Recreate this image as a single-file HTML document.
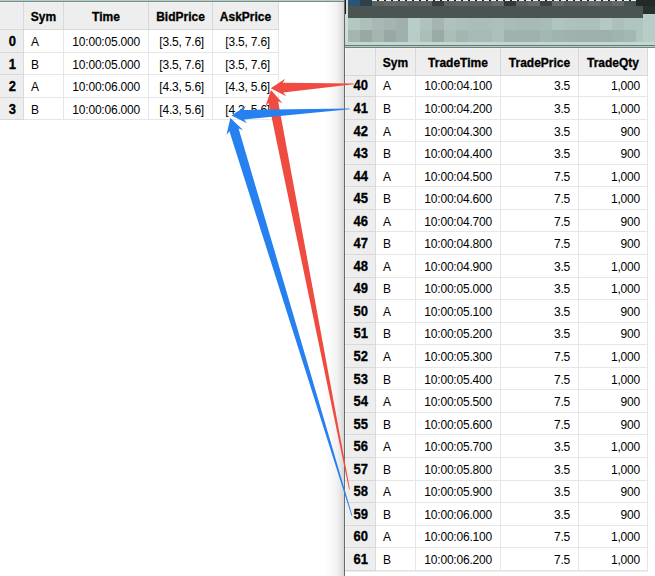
<!DOCTYPE html>
<html><head><meta charset="utf-8"><style>
html,body{margin:0;padding:0;}
body{width:655px;height:576px;position:relative;overflow:hidden;background:#fff;font-family:"Liberation Sans",sans-serif;}
body>div{position:absolute;}
.t{white-space:nowrap;overflow:visible;}
</style></head><body>
<div style="left:0px;top:0px;width:345px;height:1px;background:#b8ccc6;"></div><div style="left:0px;top:1px;width:345px;height:1px;background:#748e88;"></div><div style="left:0px;top:2px;width:278px;height:27px;background:#eeeeee;"></div><div style="left:0px;top:2px;width:278px;height:1px;background:#f1f1f1;"></div><div style="left:0px;top:29px;width:23px;height:91px;background:#eeeeee;"></div><div style="left:23px;top:2px;width:1px;height:27px;background:#d9d9d9;"></div><div style="left:23px;top:29px;width:1px;height:91px;background:#dadada;"></div><div style="left:63px;top:2px;width:1px;height:27px;background:#d9d9d9;"></div><div style="left:63px;top:29px;width:1px;height:91px;background:#e6e6e6;"></div><div style="left:148px;top:2px;width:1px;height:27px;background:#d9d9d9;"></div><div style="left:148px;top:29px;width:1px;height:91px;background:#e6e6e6;"></div><div style="left:212px;top:2px;width:1px;height:27px;background:#d9d9d9;"></div><div style="left:212px;top:29px;width:1px;height:91px;background:#e6e6e6;"></div><div style="left:278px;top:2px;width:1px;height:27px;background:#d9d9d9;"></div><div style="left:278px;top:29px;width:1px;height:91px;background:#e6e6e6;"></div><div style="left:0px;top:29px;width:279px;height:1px;background:#d8d8d8;"></div><div style="left:24px;top:52px;width:255px;height:1px;background:#e6e6e6;"></div><div style="left:0px;top:52px;width:23px;height:1px;background:#d9d9d9;"></div><div style="left:24px;top:74px;width:255px;height:1px;background:#e6e6e6;"></div><div style="left:0px;top:74px;width:23px;height:1px;background:#d9d9d9;"></div><div style="left:24px;top:97px;width:255px;height:1px;background:#e6e6e6;"></div><div style="left:0px;top:97px;width:23px;height:1px;background:#d9d9d9;"></div><div style="left:24px;top:119px;width:255px;height:1px;background:#e6e6e6;"></div><div style="left:0px;top:119px;width:23px;height:1px;background:#d9d9d9;"></div><div class="t" style="left:24px;top:3.5px;width:39px;height:27px;line-height:27px;text-align:center;font-size:12px;color:#000;font-weight:bold;-webkit-text-stroke:0.3px #000;transform:scaleY(1.1);">Sym</div><div class="t" style="left:64px;top:3.5px;width:84px;height:27px;line-height:27px;text-align:center;font-size:12px;color:#000;font-weight:bold;-webkit-text-stroke:0.3px #000;transform:scaleY(1.1);">Time</div><div class="t" style="left:149px;top:3.5px;width:63px;height:27px;line-height:27px;text-align:center;font-size:12px;color:#000;font-weight:bold;-webkit-text-stroke:0.3px #000;transform:scaleY(1.1);">BidPrice</div><div class="t" style="left:213px;top:3.5px;width:65px;height:27px;line-height:27px;text-align:center;font-size:12px;color:#000;font-weight:bold;-webkit-text-stroke:0.3px #000;transform:scaleY(1.1);">AskPrice</div><div class="t" style="left:0px;top:32.2px;width:16px;height:20px;line-height:20px;text-align:right;font-size:13px;color:#000;font-weight:bold;-webkit-text-stroke:0.3px #000;transform:scaleY(1.1);">0</div><div class="t" style="left:31px;top:32.2px;width:30px;height:20px;line-height:20px;text-align:left;font-size:12px;color:#000;letter-spacing:-0.2px;">A</div><div class="t" style="left:63px;top:32.2px;width:77px;height:20px;line-height:20px;text-align:right;font-size:12px;color:#000;letter-spacing:-0.2px;">10:00:05.000</div><div class="t" style="left:148px;top:32.2px;width:56px;height:20px;line-height:20px;text-align:right;font-size:12px;color:#000;letter-spacing:-0.2px;">[3.5, 7.6]</div><div class="t" style="left:212px;top:32.2px;width:58px;height:20px;line-height:20px;text-align:right;font-size:12px;color:#000;letter-spacing:-0.2px;">[3.5, 7.6]</div><div class="t" style="left:0px;top:54.74px;width:16px;height:20px;line-height:20px;text-align:right;font-size:13px;color:#000;font-weight:bold;-webkit-text-stroke:0.3px #000;transform:scaleY(1.1);">1</div><div class="t" style="left:31px;top:54.74px;width:30px;height:20px;line-height:20px;text-align:left;font-size:12px;color:#000;letter-spacing:-0.2px;">B</div><div class="t" style="left:63px;top:54.74px;width:77px;height:20px;line-height:20px;text-align:right;font-size:12px;color:#000;letter-spacing:-0.2px;">10:00:05.000</div><div class="t" style="left:148px;top:54.74px;width:56px;height:20px;line-height:20px;text-align:right;font-size:12px;color:#000;letter-spacing:-0.2px;">[3.5, 7.6]</div><div class="t" style="left:212px;top:54.74px;width:58px;height:20px;line-height:20px;text-align:right;font-size:12px;color:#000;letter-spacing:-0.2px;">[3.5, 7.6]</div><div class="t" style="left:0px;top:77.27px;width:16px;height:20px;line-height:20px;text-align:right;font-size:13px;color:#000;font-weight:bold;-webkit-text-stroke:0.3px #000;transform:scaleY(1.1);">2</div><div class="t" style="left:31px;top:77.27px;width:30px;height:20px;line-height:20px;text-align:left;font-size:12px;color:#000;letter-spacing:-0.2px;">A</div><div class="t" style="left:63px;top:77.27px;width:77px;height:20px;line-height:20px;text-align:right;font-size:12px;color:#000;letter-spacing:-0.2px;">10:00:06.000</div><div class="t" style="left:148px;top:77.27px;width:56px;height:20px;line-height:20px;text-align:right;font-size:12px;color:#000;letter-spacing:-0.2px;">[4.3, 5.6]</div><div class="t" style="left:212px;top:77.27px;width:58px;height:20px;line-height:20px;text-align:right;font-size:12px;color:#000;letter-spacing:-0.2px;">[4.3, 5.6]</div><div class="t" style="left:0px;top:99.81px;width:16px;height:20px;line-height:20px;text-align:right;font-size:13px;color:#000;font-weight:bold;-webkit-text-stroke:0.3px #000;transform:scaleY(1.1);">3</div><div class="t" style="left:31px;top:99.81px;width:30px;height:20px;line-height:20px;text-align:left;font-size:12px;color:#000;letter-spacing:-0.2px;">B</div><div class="t" style="left:63px;top:99.81px;width:77px;height:20px;line-height:20px;text-align:right;font-size:12px;color:#000;letter-spacing:-0.2px;">10:00:06.000</div><div class="t" style="left:148px;top:99.81px;width:56px;height:20px;line-height:20px;text-align:right;font-size:12px;color:#000;letter-spacing:-0.2px;">[4.3, 5.6]</div><div class="t" style="left:212px;top:99.81px;width:58px;height:20px;line-height:20px;text-align:right;font-size:12px;color:#000;letter-spacing:-0.2px;">[4.3, 5.6]</div><div style="left:324px;top:2px;width:20px;height:574px;background:linear-gradient(to right,rgba(0,0,0,0) 0%,rgba(0,0,0,0.02) 30%,rgba(0,0,0,0.05) 62%,rgba(0,0,0,0.098) 82%,rgba(0,0,0,0.153) 97%,rgba(0,0,0,0.17) 100%);"></div><div style="left:345px;top:0px;width:310px;height:576px;background:#ffffff;"></div><div style="left:344px;top:0px;width:1px;height:576px;background:#6a6a6a;"></div><div style="left:345px;top:0px;width:1px;height:14px;background:#1a1a1a;"></div><div style="left:345px;top:14px;width:1px;height:31px;background:#c8dcd6;"></div><div style="left:346px;top:0px;width:2px;height:42px;background:#d4dcda;"></div><div style="left:348px;top:0px;width:12px;height:6px;background:#2a5478;"></div><div style="left:360px;top:0px;width:12px;height:6px;background:#30404a;"></div><div style="left:372px;top:0px;width:12px;height:6px;background:#5c6060;"></div><div style="left:384px;top:0px;width:12px;height:6px;background:#646866;"></div><div style="left:396px;top:0px;width:12px;height:6px;background:#606462;"></div><div style="left:408px;top:0px;width:12px;height:6px;background:#5a5e5c;"></div><div style="left:420px;top:0px;width:12px;height:6px;background:#5e6260;"></div><div style="left:432px;top:0px;width:12px;height:6px;background:#38403e;"></div><div style="left:444px;top:0px;width:12px;height:6px;background:#5c605e;"></div><div style="left:456px;top:0px;width:12px;height:6px;background:#5e6462;"></div><div style="left:468px;top:0px;width:12px;height:6px;background:#5c6260;"></div><div style="left:480px;top:0px;width:12px;height:6px;background:#586060;"></div><div style="left:492px;top:0px;width:12px;height:6px;background:#646a68;"></div><div style="left:504px;top:0px;width:12px;height:6px;background:#30383a;"></div><div style="left:516px;top:0px;width:12px;height:6px;background:#5a605e;"></div><div style="left:528px;top:0px;width:12px;height:6px;background:#646a68;"></div><div style="left:540px;top:0px;width:12px;height:6px;background:#3a4244;"></div><div style="left:552px;top:0px;width:12px;height:6px;background:#646a68;"></div><div style="left:564px;top:0px;width:12px;height:6px;background:#5a605e;"></div><div style="left:576px;top:0px;width:12px;height:6px;background:#5a605e;"></div><div style="left:588px;top:0px;width:12px;height:6px;background:#646a68;"></div><div style="left:600px;top:0px;width:12px;height:6px;background:#5a605e;"></div><div style="left:612px;top:0px;width:12px;height:6px;background:#646a68;"></div><div style="left:624px;top:0px;width:12px;height:6px;background:#4a5252;"></div><div style="left:636px;top:0px;width:19px;height:6px;background:#222a28;"></div><div style="left:348px;top:6px;width:295px;height:12px;background:#4a5452;"></div><div style="left:643px;top:6px;width:12px;height:8px;background:#283030;"></div><div style="left:643px;top:14px;width:12px;height:28px;background:#b8ccc8;"></div><div style="left:348px;top:18px;width:12px;height:12px;background:#b4c8c2;"></div><div style="left:360px;top:18px;width:12px;height:12px;background:#afc0bb;"></div><div style="left:372px;top:18px;width:12px;height:12px;background:#a8b8b4;"></div><div style="left:384px;top:18px;width:12px;height:12px;background:#a4b4b0;"></div><div style="left:396px;top:18px;width:12px;height:12px;background:#a0b0ac;"></div><div style="left:408px;top:18px;width:12px;height:12px;background:#b8ccc8;"></div><div style="left:420px;top:18px;width:12px;height:12px;background:#b0c2bd;"></div><div style="left:432px;top:18px;width:12px;height:12px;background:#a4b4b0;"></div><div style="left:444px;top:18px;width:12px;height:12px;background:#b0c2bd;"></div><div style="left:456px;top:18px;width:12px;height:12px;background:#acc0bb;"></div><div style="left:468px;top:18px;width:12px;height:12px;background:#aabdb8;"></div><div style="left:480px;top:18px;width:12px;height:12px;background:#aabdb8;"></div><div style="left:492px;top:18px;width:12px;height:12px;background:#acbfba;"></div><div style="left:504px;top:18px;width:12px;height:12px;background:#a8bcb8;"></div><div style="left:516px;top:18px;width:12px;height:12px;background:#a8bab6;"></div><div style="left:528px;top:18px;width:12px;height:12px;background:#a8bab6;"></div><div style="left:540px;top:18px;width:12px;height:12px;background:#a8bcb8;"></div><div style="left:552px;top:18px;width:12px;height:12px;background:#b0c4c0;"></div><div style="left:564px;top:18px;width:12px;height:12px;background:#aec2bd;"></div><div style="left:576px;top:18px;width:12px;height:12px;background:#acc0bb;"></div><div style="left:588px;top:18px;width:12px;height:12px;background:#acc0bb;"></div><div style="left:600px;top:18px;width:12px;height:12px;background:#b4c8c4;"></div><div style="left:612px;top:18px;width:12px;height:12px;background:#acc0bb;"></div><div style="left:624px;top:18px;width:12px;height:12px;background:#b0c4c0;"></div><div style="left:636px;top:18px;width:7px;height:12px;background:#b0c4c0;"></div><div style="left:348px;top:30px;width:12px;height:12px;background:#a5b5b0;"></div><div style="left:360px;top:30px;width:12px;height:12px;background:#98a8a3;"></div><div style="left:372px;top:30px;width:12px;height:12px;background:#a4b4b0;"></div><div style="left:384px;top:30px;width:12px;height:12px;background:#98a8a4;"></div><div style="left:396px;top:30px;width:12px;height:12px;background:#a0b0ac;"></div><div style="left:408px;top:30px;width:12px;height:12px;background:#b8ccc8;"></div><div style="left:420px;top:30px;width:12px;height:12px;background:#acbeb8;"></div><div style="left:432px;top:30px;width:12px;height:12px;background:#9aaaa6;"></div><div style="left:444px;top:30px;width:12px;height:12px;background:#acbeb8;"></div><div style="left:456px;top:30px;width:12px;height:12px;background:#a4b6b1;"></div><div style="left:468px;top:30px;width:12px;height:12px;background:#a8bab5;"></div><div style="left:480px;top:30px;width:12px;height:12px;background:#a8bab5;"></div><div style="left:492px;top:30px;width:12px;height:12px;background:#acbfba;"></div><div style="left:504px;top:30px;width:12px;height:12px;background:#a0b2ae;"></div><div style="left:516px;top:30px;width:12px;height:12px;background:#a0b2ae;"></div><div style="left:528px;top:30px;width:12px;height:12px;background:#a0b2ae;"></div><div style="left:540px;top:30px;width:12px;height:12px;background:#a4b8b3;"></div><div style="left:552px;top:30px;width:12px;height:12px;background:#a0b4af;"></div><div style="left:564px;top:30px;width:12px;height:12px;background:#a0b2ae;"></div><div style="left:576px;top:30px;width:12px;height:12px;background:#9eb0ac;"></div><div style="left:588px;top:30px;width:12px;height:12px;background:#9eb0ac;"></div><div style="left:600px;top:30px;width:12px;height:12px;background:#9eb0ac;"></div><div style="left:612px;top:30px;width:12px;height:12px;background:#a0b4af;"></div><div style="left:624px;top:30px;width:12px;height:12px;background:#a4b8b3;"></div><div style="left:636px;top:30px;width:7px;height:12px;background:#b0c4c0;"></div><div style="left:372px;top:0px;width:264px;height:1px;background:repeating-linear-gradient(to right,#f0f0f0 0px,#f0f0f0 5px,#202020 5px,#202020 7px);"></div><div style="left:345px;top:42px;width:310px;height:3px;background:#c8d6d2;"></div><div style="left:345px;top:45px;width:310px;height:1px;background:#627a74;"></div><div style="left:345px;top:46px;width:310px;height:1px;background:#b8ccc6;"></div><div style="left:345px;top:47px;width:310px;height:1px;background:#6c8680;"></div><div style="left:345px;top:48px;width:302px;height:27px;background:#eeeeee;"></div><div style="left:345px;top:48px;width:302px;height:1px;background:#f2f2f2;"></div><div style="left:345px;top:75px;width:30px;height:497px;background:#eeeeee;"></div><div style="left:345px;top:48px;width:1px;height:524px;background:#f4f4f4;"></div><div style="left:375px;top:48px;width:1px;height:27px;background:#d9d9d9;"></div><div style="left:375px;top:75px;width:1px;height:497px;background:#dadada;"></div><div style="left:415px;top:48px;width:1px;height:27px;background:#d9d9d9;"></div><div style="left:415px;top:75px;width:1px;height:497px;background:#e6e6e6;"></div><div style="left:500px;top:48px;width:1px;height:27px;background:#d9d9d9;"></div><div style="left:500px;top:75px;width:1px;height:497px;background:#e6e6e6;"></div><div style="left:578px;top:48px;width:1px;height:27px;background:#d9d9d9;"></div><div style="left:578px;top:75px;width:1px;height:497px;background:#e6e6e6;"></div><div style="left:647px;top:48px;width:1px;height:27px;background:#d9d9d9;"></div><div style="left:647px;top:75px;width:1px;height:497px;background:#e6e6e6;"></div><div style="left:345px;top:75px;width:303px;height:1px;background:#d8d8d8;"></div><div style="left:376px;top:96px;width:272px;height:1px;background:#e6e6e6;"></div><div style="left:345px;top:96px;width:30px;height:1px;background:#d9d9d9;"></div><div style="left:376px;top:119px;width:272px;height:1px;background:#e6e6e6;"></div><div style="left:345px;top:119px;width:30px;height:1px;background:#d9d9d9;"></div><div style="left:376px;top:141px;width:272px;height:1px;background:#e6e6e6;"></div><div style="left:345px;top:141px;width:30px;height:1px;background:#d9d9d9;"></div><div style="left:376px;top:164px;width:272px;height:1px;background:#e6e6e6;"></div><div style="left:345px;top:164px;width:30px;height:1px;background:#d9d9d9;"></div><div style="left:376px;top:186px;width:272px;height:1px;background:#e6e6e6;"></div><div style="left:345px;top:186px;width:30px;height:1px;background:#d9d9d9;"></div><div style="left:376px;top:209px;width:272px;height:1px;background:#e6e6e6;"></div><div style="left:345px;top:209px;width:30px;height:1px;background:#d9d9d9;"></div><div style="left:376px;top:231px;width:272px;height:1px;background:#e6e6e6;"></div><div style="left:345px;top:231px;width:30px;height:1px;background:#d9d9d9;"></div><div style="left:376px;top:254px;width:272px;height:1px;background:#e6e6e6;"></div><div style="left:345px;top:254px;width:30px;height:1px;background:#d9d9d9;"></div><div style="left:376px;top:277px;width:272px;height:1px;background:#e6e6e6;"></div><div style="left:345px;top:277px;width:30px;height:1px;background:#d9d9d9;"></div><div style="left:376px;top:299px;width:272px;height:1px;background:#e6e6e6;"></div><div style="left:345px;top:299px;width:30px;height:1px;background:#d9d9d9;"></div><div style="left:376px;top:322px;width:272px;height:1px;background:#e6e6e6;"></div><div style="left:345px;top:322px;width:30px;height:1px;background:#d9d9d9;"></div><div style="left:376px;top:344px;width:272px;height:1px;background:#e6e6e6;"></div><div style="left:345px;top:344px;width:30px;height:1px;background:#d9d9d9;"></div><div style="left:376px;top:367px;width:272px;height:1px;background:#e6e6e6;"></div><div style="left:345px;top:367px;width:30px;height:1px;background:#d9d9d9;"></div><div style="left:376px;top:389px;width:272px;height:1px;background:#e6e6e6;"></div><div style="left:345px;top:389px;width:30px;height:1px;background:#d9d9d9;"></div><div style="left:376px;top:412px;width:272px;height:1px;background:#e6e6e6;"></div><div style="left:345px;top:412px;width:30px;height:1px;background:#d9d9d9;"></div><div style="left:376px;top:434px;width:272px;height:1px;background:#e6e6e6;"></div><div style="left:345px;top:434px;width:30px;height:1px;background:#d9d9d9;"></div><div style="left:376px;top:457px;width:272px;height:1px;background:#e6e6e6;"></div><div style="left:345px;top:457px;width:30px;height:1px;background:#d9d9d9;"></div><div style="left:376px;top:480px;width:272px;height:1px;background:#e6e6e6;"></div><div style="left:345px;top:480px;width:30px;height:1px;background:#d9d9d9;"></div><div style="left:376px;top:502px;width:272px;height:1px;background:#e6e6e6;"></div><div style="left:345px;top:502px;width:30px;height:1px;background:#d9d9d9;"></div><div style="left:376px;top:525px;width:272px;height:1px;background:#e6e6e6;"></div><div style="left:345px;top:525px;width:30px;height:1px;background:#d9d9d9;"></div><div style="left:376px;top:547px;width:272px;height:1px;background:#e6e6e6;"></div><div style="left:345px;top:547px;width:30px;height:1px;background:#d9d9d9;"></div><div style="left:376px;top:570px;width:272px;height:1px;background:#e6e6e6;"></div><div style="left:345px;top:570px;width:30px;height:1px;background:#d9d9d9;"></div><div style="left:345px;top:571px;width:303px;height:1px;background:#ececec;"></div><div class="t" style="left:376px;top:49.5px;width:39px;height:27px;line-height:27px;text-align:center;font-size:12px;color:#000;font-weight:bold;-webkit-text-stroke:0.3px #000;transform:scaleY(1.1);">Sym</div><div class="t" style="left:416px;top:49.5px;width:84px;height:27px;line-height:27px;text-align:center;font-size:12px;color:#000;font-weight:bold;-webkit-text-stroke:0.3px #000;transform:scaleY(1.1);">TradeTime</div><div class="t" style="left:501px;top:49.5px;width:77px;height:27px;line-height:27px;text-align:center;font-size:12px;color:#000;font-weight:bold;-webkit-text-stroke:0.3px #000;transform:scaleY(1.1);">TradePrice</div><div class="t" style="left:579px;top:49.5px;width:68px;height:27px;line-height:27px;text-align:center;font-size:12px;color:#000;font-weight:bold;-webkit-text-stroke:0.3px #000;transform:scaleY(1.1);">TradeQty</div><div class="t" style="left:345px;top:76.4px;width:23px;height:20px;line-height:20px;text-align:right;font-size:13px;color:#000;font-weight:bold;-webkit-text-stroke:0.3px #000;transform:scaleY(1.1);">40</div><div class="t" style="left:383px;top:76.4px;width:30px;height:20px;line-height:20px;text-align:left;font-size:12px;color:#000;letter-spacing:-0.2px;">A</div><div class="t" style="left:415px;top:76.4px;width:77px;height:20px;line-height:20px;text-align:right;font-size:12px;color:#000;letter-spacing:-0.2px;">10:00:04.100</div><div class="t" style="left:500px;top:76.4px;width:70px;height:20px;line-height:20px;text-align:right;font-size:12px;color:#000;letter-spacing:-0.2px;">3.5</div><div class="t" style="left:578px;top:76.4px;width:62px;height:20px;line-height:20px;text-align:right;font-size:12px;color:#000;letter-spacing:-0.2px;">1,000</div><div class="t" style="left:345px;top:98.95px;width:23px;height:20px;line-height:20px;text-align:right;font-size:13px;color:#000;font-weight:bold;-webkit-text-stroke:0.3px #000;transform:scaleY(1.1);">41</div><div class="t" style="left:383px;top:98.95px;width:30px;height:20px;line-height:20px;text-align:left;font-size:12px;color:#000;letter-spacing:-0.2px;">B</div><div class="t" style="left:415px;top:98.95px;width:77px;height:20px;line-height:20px;text-align:right;font-size:12px;color:#000;letter-spacing:-0.2px;">10:00:04.200</div><div class="t" style="left:500px;top:98.95px;width:70px;height:20px;line-height:20px;text-align:right;font-size:12px;color:#000;letter-spacing:-0.2px;">3.5</div><div class="t" style="left:578px;top:98.95px;width:62px;height:20px;line-height:20px;text-align:right;font-size:12px;color:#000;letter-spacing:-0.2px;">1,000</div><div class="t" style="left:345px;top:121.5px;width:23px;height:20px;line-height:20px;text-align:right;font-size:13px;color:#000;font-weight:bold;-webkit-text-stroke:0.3px #000;transform:scaleY(1.1);">42</div><div class="t" style="left:383px;top:121.5px;width:30px;height:20px;line-height:20px;text-align:left;font-size:12px;color:#000;letter-spacing:-0.2px;">A</div><div class="t" style="left:415px;top:121.5px;width:77px;height:20px;line-height:20px;text-align:right;font-size:12px;color:#000;letter-spacing:-0.2px;">10:00:04.300</div><div class="t" style="left:500px;top:121.5px;width:70px;height:20px;line-height:20px;text-align:right;font-size:12px;color:#000;letter-spacing:-0.2px;">3.5</div><div class="t" style="left:578px;top:121.5px;width:62px;height:20px;line-height:20px;text-align:right;font-size:12px;color:#000;letter-spacing:-0.2px;">900</div><div class="t" style="left:345px;top:144.05px;width:23px;height:20px;line-height:20px;text-align:right;font-size:13px;color:#000;font-weight:bold;-webkit-text-stroke:0.3px #000;transform:scaleY(1.1);">43</div><div class="t" style="left:383px;top:144.05px;width:30px;height:20px;line-height:20px;text-align:left;font-size:12px;color:#000;letter-spacing:-0.2px;">B</div><div class="t" style="left:415px;top:144.05px;width:77px;height:20px;line-height:20px;text-align:right;font-size:12px;color:#000;letter-spacing:-0.2px;">10:00:04.400</div><div class="t" style="left:500px;top:144.05px;width:70px;height:20px;line-height:20px;text-align:right;font-size:12px;color:#000;letter-spacing:-0.2px;">3.5</div><div class="t" style="left:578px;top:144.05px;width:62px;height:20px;line-height:20px;text-align:right;font-size:12px;color:#000;letter-spacing:-0.2px;">900</div><div class="t" style="left:345px;top:166.6px;width:23px;height:20px;line-height:20px;text-align:right;font-size:13px;color:#000;font-weight:bold;-webkit-text-stroke:0.3px #000;transform:scaleY(1.1);">44</div><div class="t" style="left:383px;top:166.6px;width:30px;height:20px;line-height:20px;text-align:left;font-size:12px;color:#000;letter-spacing:-0.2px;">A</div><div class="t" style="left:415px;top:166.6px;width:77px;height:20px;line-height:20px;text-align:right;font-size:12px;color:#000;letter-spacing:-0.2px;">10:00:04.500</div><div class="t" style="left:500px;top:166.6px;width:70px;height:20px;line-height:20px;text-align:right;font-size:12px;color:#000;letter-spacing:-0.2px;">7.5</div><div class="t" style="left:578px;top:166.6px;width:62px;height:20px;line-height:20px;text-align:right;font-size:12px;color:#000;letter-spacing:-0.2px;">1,000</div><div class="t" style="left:345px;top:189.15px;width:23px;height:20px;line-height:20px;text-align:right;font-size:13px;color:#000;font-weight:bold;-webkit-text-stroke:0.3px #000;transform:scaleY(1.1);">45</div><div class="t" style="left:383px;top:189.15px;width:30px;height:20px;line-height:20px;text-align:left;font-size:12px;color:#000;letter-spacing:-0.2px;">B</div><div class="t" style="left:415px;top:189.15px;width:77px;height:20px;line-height:20px;text-align:right;font-size:12px;color:#000;letter-spacing:-0.2px;">10:00:04.600</div><div class="t" style="left:500px;top:189.15px;width:70px;height:20px;line-height:20px;text-align:right;font-size:12px;color:#000;letter-spacing:-0.2px;">7.5</div><div class="t" style="left:578px;top:189.15px;width:62px;height:20px;line-height:20px;text-align:right;font-size:12px;color:#000;letter-spacing:-0.2px;">1,000</div><div class="t" style="left:345px;top:211.7px;width:23px;height:20px;line-height:20px;text-align:right;font-size:13px;color:#000;font-weight:bold;-webkit-text-stroke:0.3px #000;transform:scaleY(1.1);">46</div><div class="t" style="left:383px;top:211.7px;width:30px;height:20px;line-height:20px;text-align:left;font-size:12px;color:#000;letter-spacing:-0.2px;">A</div><div class="t" style="left:415px;top:211.7px;width:77px;height:20px;line-height:20px;text-align:right;font-size:12px;color:#000;letter-spacing:-0.2px;">10:00:04.700</div><div class="t" style="left:500px;top:211.7px;width:70px;height:20px;line-height:20px;text-align:right;font-size:12px;color:#000;letter-spacing:-0.2px;">7.5</div><div class="t" style="left:578px;top:211.7px;width:62px;height:20px;line-height:20px;text-align:right;font-size:12px;color:#000;letter-spacing:-0.2px;">900</div><div class="t" style="left:345px;top:234.25px;width:23px;height:20px;line-height:20px;text-align:right;font-size:13px;color:#000;font-weight:bold;-webkit-text-stroke:0.3px #000;transform:scaleY(1.1);">47</div><div class="t" style="left:383px;top:234.25px;width:30px;height:20px;line-height:20px;text-align:left;font-size:12px;color:#000;letter-spacing:-0.2px;">B</div><div class="t" style="left:415px;top:234.25px;width:77px;height:20px;line-height:20px;text-align:right;font-size:12px;color:#000;letter-spacing:-0.2px;">10:00:04.800</div><div class="t" style="left:500px;top:234.25px;width:70px;height:20px;line-height:20px;text-align:right;font-size:12px;color:#000;letter-spacing:-0.2px;">7.5</div><div class="t" style="left:578px;top:234.25px;width:62px;height:20px;line-height:20px;text-align:right;font-size:12px;color:#000;letter-spacing:-0.2px;">900</div><div class="t" style="left:345px;top:256.8px;width:23px;height:20px;line-height:20px;text-align:right;font-size:13px;color:#000;font-weight:bold;-webkit-text-stroke:0.3px #000;transform:scaleY(1.1);">48</div><div class="t" style="left:383px;top:256.8px;width:30px;height:20px;line-height:20px;text-align:left;font-size:12px;color:#000;letter-spacing:-0.2px;">A</div><div class="t" style="left:415px;top:256.8px;width:77px;height:20px;line-height:20px;text-align:right;font-size:12px;color:#000;letter-spacing:-0.2px;">10:00:04.900</div><div class="t" style="left:500px;top:256.8px;width:70px;height:20px;line-height:20px;text-align:right;font-size:12px;color:#000;letter-spacing:-0.2px;">3.5</div><div class="t" style="left:578px;top:256.8px;width:62px;height:20px;line-height:20px;text-align:right;font-size:12px;color:#000;letter-spacing:-0.2px;">1,000</div><div class="t" style="left:345px;top:279.35px;width:23px;height:20px;line-height:20px;text-align:right;font-size:13px;color:#000;font-weight:bold;-webkit-text-stroke:0.3px #000;transform:scaleY(1.1);">49</div><div class="t" style="left:383px;top:279.35px;width:30px;height:20px;line-height:20px;text-align:left;font-size:12px;color:#000;letter-spacing:-0.2px;">B</div><div class="t" style="left:415px;top:279.35px;width:77px;height:20px;line-height:20px;text-align:right;font-size:12px;color:#000;letter-spacing:-0.2px;">10:00:05.000</div><div class="t" style="left:500px;top:279.35px;width:70px;height:20px;line-height:20px;text-align:right;font-size:12px;color:#000;letter-spacing:-0.2px;">3.5</div><div class="t" style="left:578px;top:279.35px;width:62px;height:20px;line-height:20px;text-align:right;font-size:12px;color:#000;letter-spacing:-0.2px;">1,000</div><div class="t" style="left:345px;top:301.9px;width:23px;height:20px;line-height:20px;text-align:right;font-size:13px;color:#000;font-weight:bold;-webkit-text-stroke:0.3px #000;transform:scaleY(1.1);">50</div><div class="t" style="left:383px;top:301.9px;width:30px;height:20px;line-height:20px;text-align:left;font-size:12px;color:#000;letter-spacing:-0.2px;">A</div><div class="t" style="left:415px;top:301.9px;width:77px;height:20px;line-height:20px;text-align:right;font-size:12px;color:#000;letter-spacing:-0.2px;">10:00:05.100</div><div class="t" style="left:500px;top:301.9px;width:70px;height:20px;line-height:20px;text-align:right;font-size:12px;color:#000;letter-spacing:-0.2px;">3.5</div><div class="t" style="left:578px;top:301.9px;width:62px;height:20px;line-height:20px;text-align:right;font-size:12px;color:#000;letter-spacing:-0.2px;">900</div><div class="t" style="left:345px;top:324.45px;width:23px;height:20px;line-height:20px;text-align:right;font-size:13px;color:#000;font-weight:bold;-webkit-text-stroke:0.3px #000;transform:scaleY(1.1);">51</div><div class="t" style="left:383px;top:324.45px;width:30px;height:20px;line-height:20px;text-align:left;font-size:12px;color:#000;letter-spacing:-0.2px;">B</div><div class="t" style="left:415px;top:324.45px;width:77px;height:20px;line-height:20px;text-align:right;font-size:12px;color:#000;letter-spacing:-0.2px;">10:00:05.200</div><div class="t" style="left:500px;top:324.45px;width:70px;height:20px;line-height:20px;text-align:right;font-size:12px;color:#000;letter-spacing:-0.2px;">3.5</div><div class="t" style="left:578px;top:324.45px;width:62px;height:20px;line-height:20px;text-align:right;font-size:12px;color:#000;letter-spacing:-0.2px;">900</div><div class="t" style="left:345px;top:347.0px;width:23px;height:20px;line-height:20px;text-align:right;font-size:13px;color:#000;font-weight:bold;-webkit-text-stroke:0.3px #000;transform:scaleY(1.1);">52</div><div class="t" style="left:383px;top:347.0px;width:30px;height:20px;line-height:20px;text-align:left;font-size:12px;color:#000;letter-spacing:-0.2px;">A</div><div class="t" style="left:415px;top:347.0px;width:77px;height:20px;line-height:20px;text-align:right;font-size:12px;color:#000;letter-spacing:-0.2px;">10:00:05.300</div><div class="t" style="left:500px;top:347.0px;width:70px;height:20px;line-height:20px;text-align:right;font-size:12px;color:#000;letter-spacing:-0.2px;">7.5</div><div class="t" style="left:578px;top:347.0px;width:62px;height:20px;line-height:20px;text-align:right;font-size:12px;color:#000;letter-spacing:-0.2px;">1,000</div><div class="t" style="left:345px;top:369.55px;width:23px;height:20px;line-height:20px;text-align:right;font-size:13px;color:#000;font-weight:bold;-webkit-text-stroke:0.3px #000;transform:scaleY(1.1);">53</div><div class="t" style="left:383px;top:369.55px;width:30px;height:20px;line-height:20px;text-align:left;font-size:12px;color:#000;letter-spacing:-0.2px;">B</div><div class="t" style="left:415px;top:369.55px;width:77px;height:20px;line-height:20px;text-align:right;font-size:12px;color:#000;letter-spacing:-0.2px;">10:00:05.400</div><div class="t" style="left:500px;top:369.55px;width:70px;height:20px;line-height:20px;text-align:right;font-size:12px;color:#000;letter-spacing:-0.2px;">7.5</div><div class="t" style="left:578px;top:369.55px;width:62px;height:20px;line-height:20px;text-align:right;font-size:12px;color:#000;letter-spacing:-0.2px;">1,000</div><div class="t" style="left:345px;top:392.1px;width:23px;height:20px;line-height:20px;text-align:right;font-size:13px;color:#000;font-weight:bold;-webkit-text-stroke:0.3px #000;transform:scaleY(1.1);">54</div><div class="t" style="left:383px;top:392.1px;width:30px;height:20px;line-height:20px;text-align:left;font-size:12px;color:#000;letter-spacing:-0.2px;">A</div><div class="t" style="left:415px;top:392.1px;width:77px;height:20px;line-height:20px;text-align:right;font-size:12px;color:#000;letter-spacing:-0.2px;">10:00:05.500</div><div class="t" style="left:500px;top:392.1px;width:70px;height:20px;line-height:20px;text-align:right;font-size:12px;color:#000;letter-spacing:-0.2px;">7.5</div><div class="t" style="left:578px;top:392.1px;width:62px;height:20px;line-height:20px;text-align:right;font-size:12px;color:#000;letter-spacing:-0.2px;">900</div><div class="t" style="left:345px;top:414.65px;width:23px;height:20px;line-height:20px;text-align:right;font-size:13px;color:#000;font-weight:bold;-webkit-text-stroke:0.3px #000;transform:scaleY(1.1);">55</div><div class="t" style="left:383px;top:414.65px;width:30px;height:20px;line-height:20px;text-align:left;font-size:12px;color:#000;letter-spacing:-0.2px;">B</div><div class="t" style="left:415px;top:414.65px;width:77px;height:20px;line-height:20px;text-align:right;font-size:12px;color:#000;letter-spacing:-0.2px;">10:00:05.600</div><div class="t" style="left:500px;top:414.65px;width:70px;height:20px;line-height:20px;text-align:right;font-size:12px;color:#000;letter-spacing:-0.2px;">7.5</div><div class="t" style="left:578px;top:414.65px;width:62px;height:20px;line-height:20px;text-align:right;font-size:12px;color:#000;letter-spacing:-0.2px;">900</div><div class="t" style="left:345px;top:437.2px;width:23px;height:20px;line-height:20px;text-align:right;font-size:13px;color:#000;font-weight:bold;-webkit-text-stroke:0.3px #000;transform:scaleY(1.1);">56</div><div class="t" style="left:383px;top:437.2px;width:30px;height:20px;line-height:20px;text-align:left;font-size:12px;color:#000;letter-spacing:-0.2px;">A</div><div class="t" style="left:415px;top:437.2px;width:77px;height:20px;line-height:20px;text-align:right;font-size:12px;color:#000;letter-spacing:-0.2px;">10:00:05.700</div><div class="t" style="left:500px;top:437.2px;width:70px;height:20px;line-height:20px;text-align:right;font-size:12px;color:#000;letter-spacing:-0.2px;">3.5</div><div class="t" style="left:578px;top:437.2px;width:62px;height:20px;line-height:20px;text-align:right;font-size:12px;color:#000;letter-spacing:-0.2px;">1,000</div><div class="t" style="left:345px;top:459.75px;width:23px;height:20px;line-height:20px;text-align:right;font-size:13px;color:#000;font-weight:bold;-webkit-text-stroke:0.3px #000;transform:scaleY(1.1);">57</div><div class="t" style="left:383px;top:459.75px;width:30px;height:20px;line-height:20px;text-align:left;font-size:12px;color:#000;letter-spacing:-0.2px;">B</div><div class="t" style="left:415px;top:459.75px;width:77px;height:20px;line-height:20px;text-align:right;font-size:12px;color:#000;letter-spacing:-0.2px;">10:00:05.800</div><div class="t" style="left:500px;top:459.75px;width:70px;height:20px;line-height:20px;text-align:right;font-size:12px;color:#000;letter-spacing:-0.2px;">3.5</div><div class="t" style="left:578px;top:459.75px;width:62px;height:20px;line-height:20px;text-align:right;font-size:12px;color:#000;letter-spacing:-0.2px;">1,000</div><div class="t" style="left:345px;top:482.3px;width:23px;height:20px;line-height:20px;text-align:right;font-size:13px;color:#000;font-weight:bold;-webkit-text-stroke:0.3px #000;transform:scaleY(1.1);">58</div><div class="t" style="left:383px;top:482.3px;width:30px;height:20px;line-height:20px;text-align:left;font-size:12px;color:#000;letter-spacing:-0.2px;">A</div><div class="t" style="left:415px;top:482.3px;width:77px;height:20px;line-height:20px;text-align:right;font-size:12px;color:#000;letter-spacing:-0.2px;">10:00:05.900</div><div class="t" style="left:500px;top:482.3px;width:70px;height:20px;line-height:20px;text-align:right;font-size:12px;color:#000;letter-spacing:-0.2px;">3.5</div><div class="t" style="left:578px;top:482.3px;width:62px;height:20px;line-height:20px;text-align:right;font-size:12px;color:#000;letter-spacing:-0.2px;">900</div><div class="t" style="left:345px;top:504.85px;width:23px;height:20px;line-height:20px;text-align:right;font-size:13px;color:#000;font-weight:bold;-webkit-text-stroke:0.3px #000;transform:scaleY(1.1);">59</div><div class="t" style="left:383px;top:504.85px;width:30px;height:20px;line-height:20px;text-align:left;font-size:12px;color:#000;letter-spacing:-0.2px;">B</div><div class="t" style="left:415px;top:504.85px;width:77px;height:20px;line-height:20px;text-align:right;font-size:12px;color:#000;letter-spacing:-0.2px;">10:00:06.000</div><div class="t" style="left:500px;top:504.85px;width:70px;height:20px;line-height:20px;text-align:right;font-size:12px;color:#000;letter-spacing:-0.2px;">3.5</div><div class="t" style="left:578px;top:504.85px;width:62px;height:20px;line-height:20px;text-align:right;font-size:12px;color:#000;letter-spacing:-0.2px;">900</div><div class="t" style="left:345px;top:527.4px;width:23px;height:20px;line-height:20px;text-align:right;font-size:13px;color:#000;font-weight:bold;-webkit-text-stroke:0.3px #000;transform:scaleY(1.1);">60</div><div class="t" style="left:383px;top:527.4px;width:30px;height:20px;line-height:20px;text-align:left;font-size:12px;color:#000;letter-spacing:-0.2px;">A</div><div class="t" style="left:415px;top:527.4px;width:77px;height:20px;line-height:20px;text-align:right;font-size:12px;color:#000;letter-spacing:-0.2px;">10:00:06.100</div><div class="t" style="left:500px;top:527.4px;width:70px;height:20px;line-height:20px;text-align:right;font-size:12px;color:#000;letter-spacing:-0.2px;">7.5</div><div class="t" style="left:578px;top:527.4px;width:62px;height:20px;line-height:20px;text-align:right;font-size:12px;color:#000;letter-spacing:-0.2px;">1,000</div><div class="t" style="left:345px;top:549.95px;width:23px;height:20px;line-height:20px;text-align:right;font-size:13px;color:#000;font-weight:bold;-webkit-text-stroke:0.3px #000;transform:scaleY(1.1);">61</div><div class="t" style="left:383px;top:549.95px;width:30px;height:20px;line-height:20px;text-align:left;font-size:12px;color:#000;letter-spacing:-0.2px;">B</div><div class="t" style="left:415px;top:549.95px;width:77px;height:20px;line-height:20px;text-align:right;font-size:12px;color:#000;letter-spacing:-0.2px;">10:00:06.200</div><div class="t" style="left:500px;top:549.95px;width:70px;height:20px;line-height:20px;text-align:right;font-size:12px;color:#000;letter-spacing:-0.2px;">7.5</div><div class="t" style="left:578px;top:549.95px;width:62px;height:20px;line-height:20px;text-align:right;font-size:12px;color:#000;letter-spacing:-0.2px;">1,000</div>
<svg width="655" height="576" style="position:absolute;left:0;top:0"><polygon points="353.68,83.40 282.72,82.84 285.21,78.80 270.70,88.30 286.15,96.18 283.24,92.43 353.72,84.20" fill="#ef4b40"/><polygon points="349.89,489.22 278.08,101.14 282.43,103.04 271.00,90.00 265.36,106.40 268.66,102.99 349.11,489.38" fill="#ef4b40"/><polygon points="349.48,108.40 243.51,109.92 245.99,105.88 231.50,115.40 246.96,123.25 244.05,119.51 349.52,109.20" fill="#2680f0"/><polygon points="352.28,515.48 238.59,128.46 243.10,129.90 230.40,118.10 226.46,134.99 229.41,131.27 351.52,515.72" fill="#2680f0"/></svg>
</body></html>
